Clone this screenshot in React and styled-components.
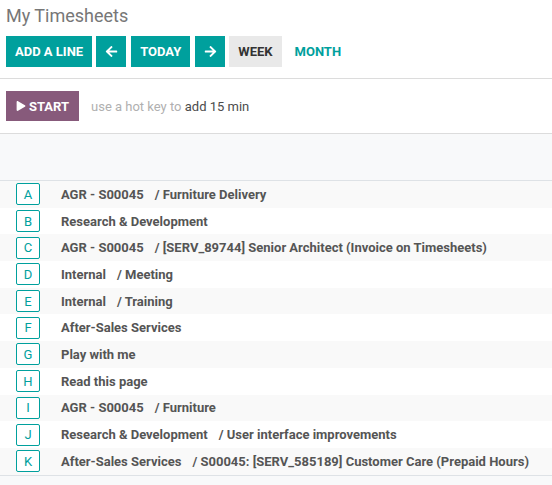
import React from 'react';
import styled, { createGlobalStyle } from 'styled-components';
import { FaArrowLeft, FaArrowRight, FaPlay } from 'react-icons/fa';

const GlobalStyle = createGlobalStyle`
  body {
    margin: 0;
    background: #fff;
    font-family: Roboto, "Liberation Sans", sans-serif;
  }
`;

const Page = styled.div`
  width: 552px;
  height: 485px;
  overflow: hidden;
  background: #f8f9fa;
`;

const ControlPanel = styled.div`
  background: #fff;
  padding: 4px 6px 11px;
  border-bottom: 1px solid #dcdcdc;
`;

const Title = styled.h1`
  margin: 0 0 8px;
  font-size: 18px;
  font-weight: 400;
  line-height: 24px;
  color: #777;
`;

const Toolbar = styled.div`
  display: flex;
  align-items: center;
  gap: 4px;
`;

const Button = styled.button`
  height: 31px;
  padding: 0 ${p => (p.$icon ? '0' : '9px')};
  width: ${p => (p.$icon ? '30px' : 'auto')};
  border: none;
  border-radius: 0;
  font-family: inherit;
  font-size: 13px;
  font-weight: 700;
  display: flex;
  align-items: center;
  justify-content: center;
  background: ${p => (p.$primary ? '#00a09d' : p.$active ? '#e9e9e9' : 'transparent')};
  color: ${p => (p.$primary ? '#fff' : p.$active ? '#333' : '#00a09d')};
  margin-left: ${p => (p.$gap ? '1px' : '0')};
`;

const StartBar = styled.div`
  background: #fff;
  display: flex;
  align-items: center;
  gap: 12px;
  padding: 12px 6px 12px;
  border-bottom: 1px solid #dcdcdc;
`;

const StartButton = styled.button`
  height: 30px;
  width: 73px;
  border: none;
  background: #875a7b;
  color: #fff;
  font-family: inherit;
  font-size: 13px;
  font-weight: 700;
  display: flex;
  align-items: center;
  justify-content: center;
  gap: 3px;
`;

const Hint = styled.span`
  font-size: 13px;
  color: #b0b0b0;

  b {
    font-weight: 400;
    color: #4c4c4c;
  }
`;

const GridHead = styled.div`
  height: 46px;
  background: #f8f9fa;
  border-bottom: 1px solid #dee2e6;
`;

const List = styled.div`
  background: #fff;
  border-bottom: 1px solid #dee2e6;
`;

const Row = styled.div`
  height: 26.7px;
  display: flex;
  align-items: center;
  background: ${p => (p.$odd ? '#f9f9f9' : '#fff')};
`;

const Key = styled.span`
  box-sizing: border-box;
  width: 24px;
  height: 22px;
  margin: 0 21px 0 16px;
  border: 1px solid #00a09d;
  border-radius: 2px;
  color: #00a09d;
  font-size: 13px;
  display: flex;
  align-items: center;
  justify-content: center;
  background: #fff;
`;

const Label = styled.span`
  font-size: 13px;
  font-weight: 700;
  color: #555;
  white-space: nowrap;
`;

const Task = styled.span`
  margin-left: 11px;
`;

const lines = [
  ['A', 'AGR - S00045', 'Furniture Delivery'],
  ['B', 'Research & Development'],
  ['C', 'AGR - S00045', '[SERV_89744] Senior Architect (Invoice on Timesheets)'],
  ['D', 'Internal', 'Meeting'],
  ['E', 'Internal', 'Training'],
  ['F', 'After-Sales Services'],
  ['G', 'Play with me'],
  ['H', 'Read this page'],
  ['I', 'AGR - S00045', 'Furniture'],
  ['J', 'Research & Development', 'User interface improvements'],
  ['K', 'After-Sales Services', 'S00045: [SERV_585189] Customer Care (Prepaid Hours)'],
];

export default function App() {
  return (
    <Page>
      <GlobalStyle />
      <ControlPanel>
        <Title>My Timesheets</Title>
        <Toolbar>
          <Button $primary>ADD A LINE</Button>
          <Button $primary $icon><FaArrowLeft size={13} /></Button>
          <Button $primary $gap>TODAY</Button>
          <Button $primary $icon $gap><FaArrowRight size={13} /></Button>
          <Button $active>WEEK</Button>
          <Button>MONTH</Button>
        </Toolbar>
      </ControlPanel>
      <StartBar>
        <StartButton><FaPlay size={10} />START</StartButton>
        <Hint>use a hot key to <b>add 15 min</b></Hint>
      </StartBar>
      <GridHead />
      <List>
        {lines.map(([key, project, task], i) => (
          <Row key={key} $odd={i % 2 === 0}>
            <Key>{key}</Key>
            <Label>
              {project}
              {task && <Task>/ {task}</Task>}
            </Label>
          </Row>
        ))}
      </List>
    </Page>
  );
}
